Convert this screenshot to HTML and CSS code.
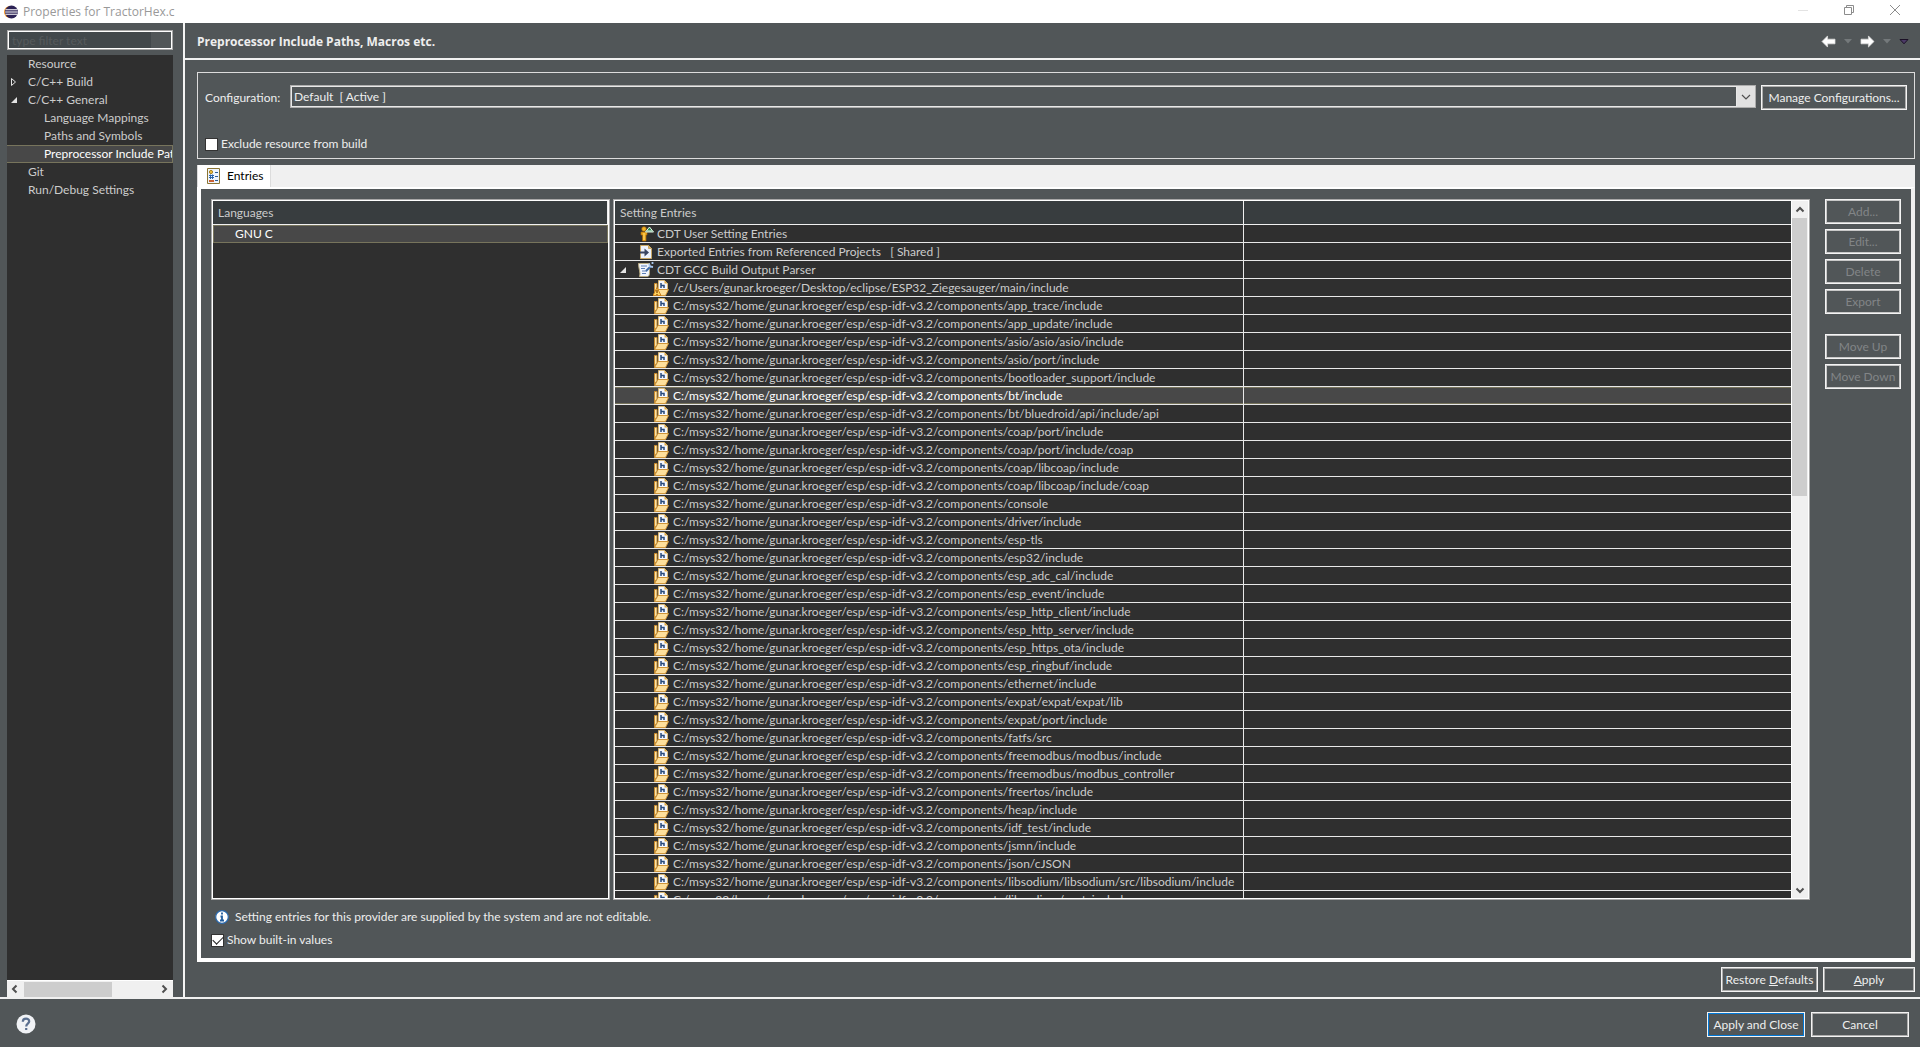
FILE: index.html
```html
<!DOCTYPE html>
<html lang="en">
<head>
<meta charset="utf-8">
<title>Properties for TractorHex.c</title>
<link rel="stylesheet" href="styles.css">
</head>
<body>
<svg class="sprite" aria-hidden="true">
  <symbol id="include" viewBox="0 0 16 16">
    <path d="M5.500 .500h6l3 3v8h-9z" fill="#f4f7fd" stroke="#d8b878"/>
    <path d="M11.500 .500v3h3z" fill="#e0a83c"/>
    <path d="M8 3v5M8 5.500h3v2.500" fill="none" stroke="#274a7c" stroke-width="1.500"/>
    <path d="M1.500 3.500h2.500v7l-2.500 4z" fill="#fbe3a8" stroke="#c88a2c"/>
    <path d="M1.500 15.500L5 9.500h10.500L12.500 15.500z" fill="#fddf9c" stroke="#d0963a"/>
  </symbol>
  <symbol id="warn" viewBox="0 0 16 16">
    <use href="#include"/>
    <path d="M4 7.500L8 15.500H0z" fill="#ffd25e" stroke="#c9811c"/>
    <path d="M4 10v3M4 14v1" stroke="#7a3d00" stroke-width="1.200"/>
  </symbol>
  <symbol id="user" viewBox="0 0 16 16">
    <circle cx="6" cy="3" r="2.300" fill="#f0b429" stroke="#a86a08" stroke-width=".7"/>
    <path d="M3 6h6v3H8v6H4.500V9H3z" fill="#eda61c" stroke="#a86a08" stroke-width=".7"/>
    <path d="M6 7v7" stroke="#ffe27a"/>
    <path d="M11.500 1L15.500 6h-8z" fill="#2c8d55" stroke="#e6f6ea"/>
    <path d="M9 5h5" stroke="#e6f6ea"/>
  </symbol>
  <symbol id="export" viewBox="0 0 16 16">
    <path d="M2.500 1.500h8l3 3v10h-11z" fill="#eef3fc" stroke="#c9a765"/>
    <path d="M10.500 1.500v3h3" fill="#e0b565" stroke="#c9a765"/>
    <path d="M2 7.500h4.500V4.500L11 8.500 6.500 12.500V9.500H2z" fill="#3a4561"/>
  </symbol>
  <symbol id="parser" viewBox="0 0 16 16">
    <path d="M.500 1.500h11v9c0 3-1 4-2 4h-8c1.500-3-1-8-1-13z" fill="#f1f5fd" stroke="#b9ab80"/>
    <path d="M3 4h6M3 6.500h4M4 9h5M4 11.500h4" stroke="#5c7fb5"/>
    <path d="M8 9l5-5" stroke="#406ca8" stroke-width="2"/>
    <path d="M11 1.500l1 3 3 .500M14.500 0v2" fill="none" stroke="#a9c6ec" stroke-width="1.800"/>
  </symbol>
  <symbol id="open" viewBox="0 0 8 8"><path d="M7 1v6H1z" fill="#e4e4e4"/></symbol>
  <symbol id="closed" viewBox="0 0 8 10"><path d="M1.500 1.500v7l4-3.500z" fill="none" stroke="#e4e4e4"/></symbol>
  <symbol id="chevron" viewBox="0 0 10 10"><path d="M1.500 6.500L5 3l3.500 3.500" fill="none" stroke="#505050" stroke-width="2"/></symbol>
  <symbol id="arrow" viewBox="0 0 16 14"><path d="M1 7l6-6v3.500h8v5H7V13z" fill="#fff" stroke="#dedede" stroke-width=".8"/></symbol>
</svg>

<header class="titlebar">
  <svg class="logo" viewBox="0 0 14 14"><circle cx="6" cy="7" r="6" fill="#f7941e"/><circle cx="7.500" cy="7" r="6.500" fill="#2c2255"/><path d="M1.500 4.800h12M1.200 7h12.600M1.500 9.200h12" stroke="#fff" stroke-width="1.100"/></svg>
  <h1 class="window-title">Properties for TractorHex.c</h1>
  <div class="window-controls">
    <button aria-label="Minimize"><svg viewBox="0 0 12 12"><path d="M1 6.500h10" stroke="#e3e3e3"/></svg></button>
    <button aria-label="Restore"><svg viewBox="0 0 12 12"><path d="M1.500 3.500h7v7h-7zM3.500 3.500v-2h7v7h-2" fill="none" stroke="#8c8c8c"/></svg></button>
    <button aria-label="Close"><svg viewBox="0 0 12 12"><path d="M1 1l10 10M11 1L1 11" stroke="#8c8c8c"/></svg></button>
  </div>
</header>

<div class="dialog">
  <aside class="sidebar">
    <input class="filter" type="text" placeholder="type filter text" aria-label="Filter">
    <nav class="tree">
      <a href="#resource">Resource</a>
      <a href="#build"><svg class="twist"><use href="#closed"/></svg>C/C++ Build</a>
      <a href="#general"><svg class="twist"><use href="#open"/></svg>C/C++ General</a>
      <a class="child" href="#mappings">Language Mappings</a>
      <a class="child" href="#symbols">Paths and Symbols</a>
      <a class="child selected" href="#includes">Preprocessor Include Paths, Macros etc.</a>
      <a href="#git">Git</a>
      <a href="#run">Run/Debug Settings</a>
    </nav>
    <div class="hscroll"><svg class="left"><use href="#chevron"/></svg><div class="thumb"></div><svg class="right"><use href="#chevron"/></svg></div>
  </aside>

  <main class="page">
    <div class="page-head">
      <h2>Preprocessor Include Paths, Macros etc.</h2>
      <div class="history">
        <button aria-label="Back"><svg class="arrow"><use href="#arrow"/></svg></button>
        <button aria-label="Back history"><svg class="caret" viewBox="0 0 8 5"><path d="M0 0h8L4 4.500z" fill="#74797b"/></svg></button>
        <button aria-label="Forward"><svg class="arrow flip"><use href="#arrow"/></svg></button>
        <button aria-label="Forward history"><svg class="caret" viewBox="0 0 8 5"><path d="M0 0h8L4 4.500z" fill="#74797b"/></svg></button>
        <button aria-label="Menu"><svg class="menu" viewBox="0 0 10 6"><path d="M1 .500h8L5 4.800z" fill="#4b3a66" stroke="#1b1026"/></svg></button>
      </div>
    </div>

    <div class="page-body">
      <section class="config">
        <div class="config-row">
          <label for="configuration">Configuration:</label>
          <div class="combo">
            <select id="configuration"><option>Default&nbsp; [ Active ]</option></select>
            <span class="drop"><svg viewBox="0 0 10 6"><path d="M1 1l4 4 4-4" fill="none" stroke="#505050" stroke-width="1.200"/></svg></span>
          </div>
          <button class="btn manage">Manage Configurations...</button>
        </div>
        <label class="check"><input type="checkbox">Exclude resource from build</label>
      </section>

      <section class="tabs">
        <div class="tab-strip">
          <button class="tab">
            <svg viewBox="0 0 13 16"><path d="M.500.500h12v15H.500z" fill="#eef4fc" stroke="#8a7433"/><circle cx="4" cy="4" r="1.600" fill="#f0c040" stroke="#a8801c"/><path d="M2 7.500h5M2 9.500h5M3.500 6.500v4.500M5.500 6.500v4.500" stroke="#2a62a8"/><path d="M2 13h5" stroke="#c4501e" stroke-width="1.800"/><path d="M8 4.500h3M8 8.500h3M8 12.500h3" stroke="#2c5c98"/></svg>Entries
          </button>
        </div>
        <div class="tab-panel">
          <div class="panes">
            <div class="frame languages">
              <table>
                <thead><tr><th>Languages</th></tr></thead>
                <tbody><tr class="selected"><td>GNU C</td></tr></tbody>
              </table>
            </div>
            <div class="frame settings">
              <div class="viewport">
                <table>
                  <colgroup><col class="name"><col></colgroup>
                  <thead><tr><th>Setting Entries</th><th></th></tr></thead>
                  <tbody>
                    <tr class="provider"><td><svg><use href="#user"/></svg>CDT User Setting Entries</td><td></td></tr>
                    <tr class="provider"><td><svg><use href="#export"/></svg>Exported Entries from Referenced Projects&nbsp;&nbsp; [ Shared ]</td><td></td></tr>
                    <tr class="provider open"><td><svg class="twist"><use href="#open"/></svg><svg><use href="#parser"/></svg>CDT GCC Build Output Parser</td><td></td></tr>
                    <tr><td><svg><use href="#warn"/></svg>/c/Users/gunar.kroeger/Desktop/eclipse/ESP32_Ziegesauger/main/include</td><td></td></tr>
                    <tr><td><svg><use href="#include"/></svg>C:/msys32/home/gunar.kroeger/esp/esp-idf-v3.2/components/app_trace/include</td><td></td></tr>
                    <tr><td><svg><use href="#include"/></svg>C:/msys32/home/gunar.kroeger/esp/esp-idf-v3.2/components/app_update/include</td><td></td></tr>
                    <tr><td><svg><use href="#include"/></svg>C:/msys32/home/gunar.kroeger/esp/esp-idf-v3.2/components/asio/asio/asio/include</td><td></td></tr>
                    <tr><td><svg><use href="#include"/></svg>C:/msys32/home/gunar.kroeger/esp/esp-idf-v3.2/components/asio/port/include</td><td></td></tr>
                    <tr><td><svg><use href="#include"/></svg>C:/msys32/home/gunar.kroeger/esp/esp-idf-v3.2/components/bootloader_support/include</td><td></td></tr>
                    <tr class="selected"><td><svg><use href="#include"/></svg>C:/msys32/home/gunar.kroeger/esp/esp-idf-v3.2/components/bt/include</td><td></td></tr>
                    <tr><td><svg><use href="#include"/></svg>C:/msys32/home/gunar.kroeger/esp/esp-idf-v3.2/components/bt/bluedroid/api/include/api</td><td></td></tr>
                    <tr><td><svg><use href="#include"/></svg>C:/msys32/home/gunar.kroeger/esp/esp-idf-v3.2/components/coap/port/include</td><td></td></tr>
                    <tr><td><svg><use href="#include"/></svg>C:/msys32/home/gunar.kroeger/esp/esp-idf-v3.2/components/coap/port/include/coap</td><td></td></tr>
                    <tr><td><svg><use href="#include"/></svg>C:/msys32/home/gunar.kroeger/esp/esp-idf-v3.2/components/coap/libcoap/include</td><td></td></tr>
                    <tr><td><svg><use href="#include"/></svg>C:/msys32/home/gunar.kroeger/esp/esp-idf-v3.2/components/coap/libcoap/include/coap</td><td></td></tr>
                    <tr><td><svg><use href="#include"/></svg>C:/msys32/home/gunar.kroeger/esp/esp-idf-v3.2/components/console</td><td></td></tr>
                    <tr><td><svg><use href="#include"/></svg>C:/msys32/home/gunar.kroeger/esp/esp-idf-v3.2/components/driver/include</td><td></td></tr>
                    <tr><td><svg><use href="#include"/></svg>C:/msys32/home/gunar.kroeger/esp/esp-idf-v3.2/components/esp-tls</td><td></td></tr>
                    <tr><td><svg><use href="#include"/></svg>C:/msys32/home/gunar.kroeger/esp/esp-idf-v3.2/components/esp32/include</td><td></td></tr>
                    <tr><td><svg><use href="#include"/></svg>C:/msys32/home/gunar.kroeger/esp/esp-idf-v3.2/components/esp_adc_cal/include</td><td></td></tr>
                    <tr><td><svg><use href="#include"/></svg>C:/msys32/home/gunar.kroeger/esp/esp-idf-v3.2/components/esp_event/include</td><td></td></tr>
                    <tr><td><svg><use href="#include"/></svg>C:/msys32/home/gunar.kroeger/esp/esp-idf-v3.2/components/esp_http_client/include</td><td></td></tr>
                    <tr><td><svg><use href="#include"/></svg>C:/msys32/home/gunar.kroeger/esp/esp-idf-v3.2/components/esp_http_server/include</td><td></td></tr>
                    <tr><td><svg><use href="#include"/></svg>C:/msys32/home/gunar.kroeger/esp/esp-idf-v3.2/components/esp_https_ota/include</td><td></td></tr>
                    <tr><td><svg><use href="#include"/></svg>C:/msys32/home/gunar.kroeger/esp/esp-idf-v3.2/components/esp_ringbuf/include</td><td></td></tr>
                    <tr><td><svg><use href="#include"/></svg>C:/msys32/home/gunar.kroeger/esp/esp-idf-v3.2/components/ethernet/include</td><td></td></tr>
                    <tr><td><svg><use href="#include"/></svg>C:/msys32/home/gunar.kroeger/esp/esp-idf-v3.2/components/expat/expat/expat/lib</td><td></td></tr>
                    <tr><td><svg><use href="#include"/></svg>C:/msys32/home/gunar.kroeger/esp/esp-idf-v3.2/components/expat/port/include</td><td></td></tr>
                    <tr><td><svg><use href="#include"/></svg>C:/msys32/home/gunar.kroeger/esp/esp-idf-v3.2/components/fatfs/src</td><td></td></tr>
                    <tr><td><svg><use href="#include"/></svg>C:/msys32/home/gunar.kroeger/esp/esp-idf-v3.2/components/freemodbus/modbus/include</td><td></td></tr>
                    <tr><td><svg><use href="#include"/></svg>C:/msys32/home/gunar.kroeger/esp/esp-idf-v3.2/components/freemodbus/modbus_controller</td><td></td></tr>
                    <tr><td><svg><use href="#include"/></svg>C:/msys32/home/gunar.kroeger/esp/esp-idf-v3.2/components/freertos/include</td><td></td></tr>
                    <tr><td><svg><use href="#include"/></svg>C:/msys32/home/gunar.kroeger/esp/esp-idf-v3.2/components/heap/include</td><td></td></tr>
                    <tr><td><svg><use href="#include"/></svg>C:/msys32/home/gunar.kroeger/esp/esp-idf-v3.2/components/idf_test/include</td><td></td></tr>
                    <tr><td><svg><use href="#include"/></svg>C:/msys32/home/gunar.kroeger/esp/esp-idf-v3.2/components/jsmn/include</td><td></td></tr>
                    <tr><td><svg><use href="#include"/></svg>C:/msys32/home/gunar.kroeger/esp/esp-idf-v3.2/components/json/cJSON</td><td></td></tr>
                    <tr><td><svg><use href="#include"/></svg>C:/msys32/home/gunar.kroeger/esp/esp-idf-v3.2/components/libsodium/libsodium/src/libsodium/include</td><td></td></tr>
                    <tr><td><svg><use href="#include"/></svg>C:/msys32/home/gunar.kroeger/esp/esp-idf-v3.2/components/libsodium/port_include</td><td></td></tr>
                  </tbody>
                </table>
              </div>
              <div class="vscroll"><svg><use href="#chevron"/></svg><div class="track"><div class="thumb"></div></div><svg class="down"><use href="#chevron"/></svg></div>
            </div>
            <div class="actions">
              <button class="btn" disabled>Add...</button>
              <button class="btn" disabled>Edit...</button>
              <button class="btn" disabled>Delete</button>
              <button class="btn" disabled>Export</button>
              <button class="btn move" disabled>Move Up</button>
              <button class="btn" disabled>Move Down</button>
            </div>
          </div>
          <p class="info"><svg viewBox="0 0 14 14"><circle cx="7" cy="7" r="6.300" fill="#fff" stroke="#2a69ad" stroke-width="1.200"/><path d="M7 2.500v2M5.500 6.500H7v4M5 10.500h4" fill="none" stroke="#1f5c9e" stroke-width="1.800"/></svg>Setting entries for this provider are supplied by the system and are not editable.</p>
          <label class="check"><input type="checkbox" checked>Show built-in values</label>
        </div>
      </section>

      <div class="page-buttons">
        <button class="btn restore">Restore <u>D</u>efaults</button>
        <button class="btn apply"><u>A</u>pply</button>
      </div>
    </div>
  </main>
</div>

<footer class="footer">
  <button class="help" aria-label="Help"><svg viewBox="0 0 20 20"><circle cx="10" cy="10" r="9.500" fill="#f0f2f5"/><path d="M6.800 7.800c0-4.300 6.600-4 6.400-.400-.100 2.200-3 2.200-3 5M10.200 14v2" fill="none" stroke="#5a6f8f" stroke-width="2.200"/></svg></button>
  <button class="btn primary">Apply and Close</button>
  <button class="btn cancel">Cancel</button>
</footer>
</body>
</html>
```
FILE: styles.css
```css
* { box-sizing: border-box; }

body {
  margin: 0;
  height: 100vh;
  display: flex;
  flex-direction: column;
  overflow: hidden;
  background: #515658;
  color: #eee;
  font: 12px/18px Lato, "Open Sans", sans-serif;
}

button, input, select { font: inherit; color: inherit; }
button { background: none; border: 0; padding: 0; }
svg { display: block; flex: none; }
.sprite { display: none; }

/* Title bar */
.titlebar {
  display: flex;
  align-items: center;
  height: 23px;
  flex: none;
  padding: 0 19px 0 4px;
  background: #fff;
}
.logo { width: 14px; height: 14px; }
.window-title {
  flex: 1;
  margin: 0 0 0 5px;
  color: #999;
  font: 400 12px/18px "Open Sans", sans-serif;
}
.window-controls { display: flex; gap: 34px; padding-bottom: 3px; }
.window-controls svg { width: 12px; height: 12px; }

/* Two-column body */
.dialog { flex: 1; min-height: 0; display: flex; }
.sidebar {
  width: 185px;
  flex: none;
  display: flex;
  flex-direction: column;
  padding: 7px 10px 0 7px;
  border-right: 2px solid #f4f4f4;
}
.filter {
  width: 100%;
  height: 20px;
  margin-bottom: 5px;
  padding: 0 4px;
  border: 1px solid #a8a8a8;
  box-shadow: inset 0 0 0 1px #fff;
  background: linear-gradient(to right, #42484b 143px, #515658 143px);
}
.filter::placeholder { color: #565a5c; opacity: 1; }
.tree { flex: 1; background: #2f2f2f; overflow: hidden; }
.tree a {
  display: flex;
  align-items: center;
  height: 18px;
  padding-left: 21px;
  border: 1px solid transparent;
  border-left-width: 0;
  color: #ccc;
  text-decoration: none;
  white-space: nowrap;
  overflow: hidden;
}
.tree .child { padding-left: 37px; }
.tree .selected { background: #484848; border-color: #77745c; color: #fff; }
.twist { width: 8px; height: 10px; }
.tree .twist { margin-left: -18px; margin-right: 10px; }
.hscroll {
  display: flex;
  align-items: center;
  height: 17px;
  background: #f0f0f0;
  border-top: 1px solid #fff;
}
.hscroll svg { width: 10px; height: 10px; margin: 0 4px 0 3px; }
.hscroll .left { transform: rotate(-90deg); }
.hscroll .right { transform: rotate(90deg); margin-left: auto; }
.hscroll .thumb { width: 88px; height: 15px; background: #cdcdcd; }

/* Page */
.page { flex: 1; min-width: 0; display: flex; flex-direction: column; }
.page-head {
  display: flex;
  align-items: center;
  justify-content: space-between;
  height: 37px;
  padding: 2px 11px 0 12px;
  border-bottom: 2px solid #f0f0f0;
}
.page-head h2 { margin: 0; font: 700 12px/18px "Open Sans", sans-serif; }
.history { display: flex; align-items: center; gap: 8px; }
.arrow { width: 15px; height: 13px; }
.flip { transform: scaleX(-1); }
.caret { width: 8px; height: 5px; }
.menu { width: 10px; height: 6px; }
.page-body {
  flex: 1;
  min-height: 0;
  display: flex;
  flex-direction: column;
  padding: 12px 5px 5px 12px;
}

.btn {
  height: 25px;
  border: 1px solid #f4f4f4;
  box-shadow: inset 0 0 0 1px #adadad;
  white-space: nowrap;
}
.btn:disabled { color: #828587; box-shadow: inset 0 0 0 1px #c8c8c8; }

.config {
  height: 87px;
  flex: none;
  padding: 12px 7px;
  border: 1px solid #dcdcdc;
}
.config-row { display: flex; margin-bottom: 25px; }
.config-row > label { width: 85px; line-height: 25px; }
.combo { flex: 1; display: flex; height: 23px; margin-right: 5px; border: 1px solid #adadad; }
.combo select {
  flex: 1;
  min-width: 0;
  appearance: none;
  background: none;
  border: 1px solid #e8e8e8;
  padding: 0 2px;
  line-height: 18px;
}
.drop { width: 18px; display: flex; align-items: center; justify-content: center; background: #e1e1e1; }
.drop svg { width: 10px; height: 6px; }
.manage { width: 146px; }
.check { display: flex; align-items: center; gap: 3px; height: 18px; }
.check input {
  appearance: none;
  width: 13px;
  height: 13px;
  margin: 0;
  border: 1px solid #333;
  background: #fff;
  display: grid;
  place-items: center;
}
.check input:checked::before {
  content: "";
  width: 9px;
  height: 5px;
  margin-bottom: 3px;
  border: solid #222;
  border-width: 0 0 1px 1px;
  transform: rotate(-45deg);
}

/* Tab folder */
.tabs { flex: 1; min-height: 0; display: flex; flex-direction: column; margin-top: 6px; }
.tab-strip { height: 22px; flex: none; background: #f0f0f0; border-left: 1px solid #dcdcdc; }
.tab {
  display: flex;
  align-items: center;
  gap: 7px;
  height: 24px;
  padding: 0 7px 2px 9px;
  background: #fff;
  border-right: 1px solid #dcdcdc;
  color: #000;
}
.tab svg { width: 13px; height: 16px; }
.tab-panel {
  flex: 1;
  min-height: 0;
  display: flex;
  flex-direction: column;
  padding: 10px;
  background: #515658;
  border: 2px solid #fff;
  border-left-width: 4px;
  border-right-color: #f0f0f0;
  border-right-width: 4px;
  border-bottom-width: 4px;
}
.panes { flex: 1; min-height: 0; display: flex; gap: 3px; }
.frame {
  display: flex;
  padding: 1px;
  border: 1px solid #a8a8a8;
  box-shadow: inset 0 0 0 1px #fff;
  background: #2f2f2f content-box;
  overflow: hidden;
}
.languages { width: 399px; flex: none; align-items: flex-start; }
.settings { flex: 1; min-width: 0; }
.viewport { flex: 1; min-width: 0; overflow: hidden; }

table { width: 100%; table-layout: fixed; border-collapse: separate; border-spacing: 0; color: #ccc; }
.name { width: 629px; }
th {
  height: 24px;
  padding: 1px 5px 0;
  background: #383d3f;
  border-right: 1px solid #f0f0f0;
  border-bottom: 1px solid #f0f0f0;
  font-weight: 400;
  text-align: left;
}
td { height: 18px; padding: 1px 0 0 38px; line-height: 16px; white-space: nowrap; overflow: hidden; }
.languages td { padding: 0 0 0 21px; border: 1px solid #77745c; }
.settings td { border-right: 1px solid #e8e8e8; border-bottom: 1px solid #e8e8e8; }
.settings td:last-child, .settings th:last-child { border-right: 0; }
.settings td svg { float: left; width: 16px; height: 16px; margin-right: 4px; }
.settings .provider td { padding-left: 23px; }
.settings .provider svg { margin-right: 3px; }
.settings .open td { padding-left: 4px; }
.settings .open td .twist { width: 8px; height: 8px; margin: 4px 11px 0 0; }
.settings .selected td { background: #484848; color: #fff; box-shadow: inset 0 1px #77745c, inset 0 -1px #77745c; }
.languages .selected td { background: #484848; color: #fff; }

.vscroll { width: 17px; flex: none; display: flex; flex-direction: column; background: #f0f0f0; border-left: 1px solid #fff; }
.vscroll svg { width: 10px; height: 10px; margin: 4px 3px 3px; }
.vscroll .down { transform: rotate(180deg); }
.track { flex: 1; }
.vscroll .thumb { width: 15px; height: 42%; background: #cdcdcd; }

.actions { width: 76px; margin-left: 12px; display: flex; flex-direction: column; gap: 5px; }
.actions .move { margin-top: 15px; }

.info { display: flex; align-items: center; gap: 6px; margin: 8px 0 5px; padding-left: 4px; }
.info svg { width: 14px; height: 14px; }
.tab-panel > .check { margin-bottom: -1px; }

.page-buttons { display: flex; justify-content: flex-end; gap: 5px; margin-top: 5px; }
.restore { width: 97px; }
.apply { width: 92px; }

/* Footer */
.footer {
  display: flex;
  align-items: center;
  gap: 6px;
  height: 50px;
  flex: none;
  padding: 3px 11px 0 16px;
  border-top: 2px solid #f0f0f0;
}
.help { margin-right: auto; padding-bottom: 2px; }
.help svg { width: 20px; height: 20px; }
.footer .btn { width: 98px; }
.primary { box-shadow: inset 0 0 0 1px #0078d7; }
```
